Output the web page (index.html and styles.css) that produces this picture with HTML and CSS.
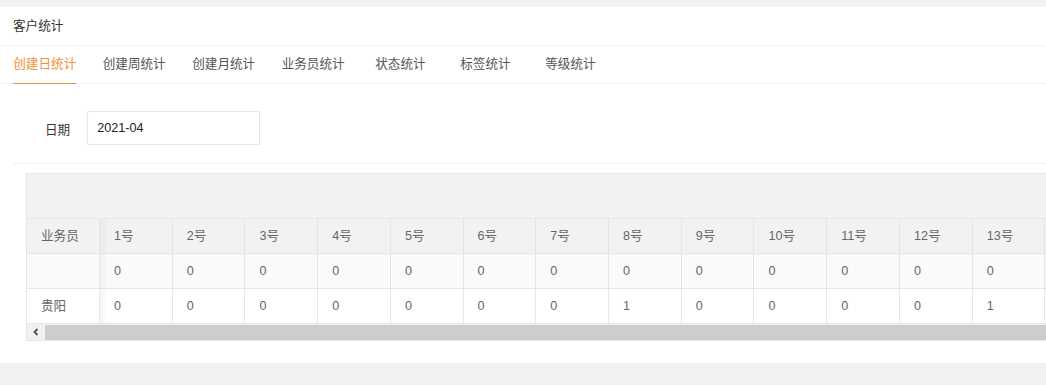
FILE: index.html
```html
<!DOCTYPE html>
<html lang="zh-CN">
<head>
<meta charset="utf-8">
<title>客户统计</title>
<link rel="stylesheet" href="styles.css">
</head>
<body>
<div class="card">
  <div class="card-header">客户统计</div>
  <ul class="tabs">
    <li class="active">创建日统计</li>
    <li>创建周统计</li>
    <li>创建月统计</li>
    <li>业务员统计</li>
    <li>状态统计</li>
    <li>标签统计</li>
    <li>等级统计</li>
  </ul>
  <div class="card-body">
    <form class="filter">
      <label class="filter-label">日期</label>
      <input class="filter-input" type="text" value="2021-04">
    </form>
    <div class="divider"></div>
    <div class="table-box">
      <div class="toolbar"></div>
      <div class="table-scroll">
        <table class="grid">
          <colgroup>
            <col class="col-first">
            <col class="col-day"><col class="col-day"><col class="col-day"><col class="col-day"><col class="col-day">
            <col class="col-day"><col class="col-day"><col class="col-day"><col class="col-day"><col class="col-day">
            <col class="col-day"><col class="col-day"><col class="col-day"><col class="col-day"><col class="col-day">
            <col class="col-day"><col class="col-day"><col class="col-day"><col class="col-day"><col class="col-day">
            <col class="col-day"><col class="col-day"><col class="col-day"><col class="col-day"><col class="col-day">
            <col class="col-day"><col class="col-day"><col class="col-day"><col class="col-day"><col class="col-day">
          </colgroup>
          <thead>
            <tr>
              <th class="fixed">业务员</th>
              <th>1号</th><th>2号</th><th>3号</th><th>4号</th><th>5号</th>
              <th>6号</th><th>7号</th><th>8号</th><th>9号</th><th>10号</th>
              <th>11号</th><th>12号</th><th>13号</th><th>14号</th><th>15号</th>
              <th>16号</th><th>17号</th><th>18号</th><th>19号</th><th>20号</th>
              <th>21号</th><th>22号</th><th>23号</th><th>24号</th><th>25号</th>
              <th>26号</th><th>27号</th><th>28号</th><th>29号</th><th>30号</th>
            </tr>
          </thead>
          <tbody>
            <tr class="row-alt">
              <td class="fixed"></td>
              <td>0</td><td>0</td><td>0</td><td>0</td><td>0</td>
              <td>0</td><td>0</td><td>0</td><td>0</td><td>0</td>
              <td>0</td><td>0</td><td>0</td><td>0</td><td>0</td>
              <td>0</td><td>0</td><td>0</td><td>0</td><td>0</td>
              <td>0</td><td>0</td><td>0</td><td>0</td><td>0</td>
              <td>0</td><td>0</td><td>0</td><td>0</td><td>0</td>
            </tr>
            <tr>
              <td class="fixed">贵阳</td>
              <td>0</td><td>0</td><td>0</td><td>0</td><td>0</td>
              <td>0</td><td>0</td><td>1</td><td>0</td><td>0</td>
              <td>0</td><td>0</td><td>1</td><td>0</td><td>0</td>
              <td>0</td><td>0</td><td>0</td><td>0</td><td>0</td>
              <td>0</td><td>0</td><td>0</td><td>0</td><td>0</td>
              <td>0</td><td>0</td><td>0</td><td>0</td><td>0</td>
            </tr>
          </tbody>
        </table>
      </div>
      <div class="hscroll">
        <span class="hscroll-arrow">
          <svg width="8" height="8" viewBox="0 0 8 8"><path d="M5.5 1 L2.5 4 L5.5 7" fill="none" stroke="#505050" stroke-width="1.8"/></svg>
        </span>
        <span class="hscroll-thumb"></span>
      </div>
    </div>
  </div>
</div>
</body>
</html>
```

FILE: styles.css
```css
html, body {
  margin: 0;
  overflow: hidden;
}

body {
  padding-top: 7px;
  background: #f2f2f2;
  font-family: "Liberation Sans", "Noto Sans CJK SC", sans-serif;
  font-size: 12.6px;
  color: #666;
}

.card {
  width: 1100px;
  background: #fff;
  padding-bottom: 22px;
}

.card-header {
  height: 38px;
  line-height: 38px;
  padding: 0 13px;
  color: #333;
  border-bottom: 1px solid #f6f6f6;
}

.tabs {
  margin: 0;
  padding: 0;
  list-style: none;
  display: flex;
  height: 37px;
  border-bottom: 1px solid #f2f2f2;
}

.tabs li {
  position: relative;
  padding: 0 13.25px;
  min-width: 58.5px;
  text-align: center;
  line-height: 37px;
  color: #555;
  white-space: nowrap;
}

.tabs li.active {
  color: #f0913c;
}

.tabs li.active::after {
  content: "";
  position: absolute;
  left: 13.25px;
  right: 13.25px;
  bottom: -1px;
  height: 1px;
  background: #f0913c;
}

.card-body {
  padding: 27px 0 0 13px;
}

.filter {
  display: flex;
  align-items: center;
  gap: 17px;
  margin: 0;
  padding-left: 32px;
}

.filter-label {
  color: #333;
}

.filter-input {
  box-sizing: border-box;
  width: 173px;
  height: 34px;
  margin: 0;
  padding: 0 9px;
  border: 1px solid #e6e6e6;
  border-radius: 2px;
  font: inherit;
  color: #222;
  outline: none;
  background: #fff;
}

.divider {
  margin-top: 18px;
  height: 1px;
  background: #f2f2f2;
}

.table-box {
  width: 1080px;
  margin: 9px 0 0 13px;
  border: 1px solid #e6e6e6;
  overflow: hidden;
}

.toolbar {
  height: 44px;
  background: #f2f2f2;
  border-bottom: 1px solid #e6e6e6;
}

.table-scroll {
  overflow: hidden;
}

.grid {
  border-collapse: separate;
  border-spacing: 0;
  table-layout: fixed;
  width: 2254.9px;
}

.col-first {
  width: 73px;
}

.col-day {
  width: 72.73px;
}

.grid th,
.grid td {
  padding: 0 14px;
  line-height: 34px;
  border-right: 1px solid #e6e6e6;
  border-bottom: 1px solid #e6e6e6;
  text-align: left;
  font-weight: normal;
  white-space: nowrap;
  overflow: hidden;
}

.grid thead th {
  background: #f2f2f2;
}

.grid .row-alt td {
  background: #fafafa;
}

.grid .fixed {
  position: relative;
  overflow: visible;
}

.grid .fixed::after {
  content: "";
  position: absolute;
  top: 0;
  bottom: -1px;
  right: -9px;
  width: 8px;
  background: linear-gradient(to right, rgba(0, 0, 0, 0.04), rgba(0, 0, 0, 0));
}

.hscroll {
  display: flex;
  height: 16px;
  background: #f1f1f1;
}

.hscroll-arrow {
  width: 18px;
  display: flex;
  align-items: center;
  justify-content: center;
}

.hscroll-thumb {
  flex: 1;
  margin-top: 1px;
  background: #cdcdcd;
}
```
